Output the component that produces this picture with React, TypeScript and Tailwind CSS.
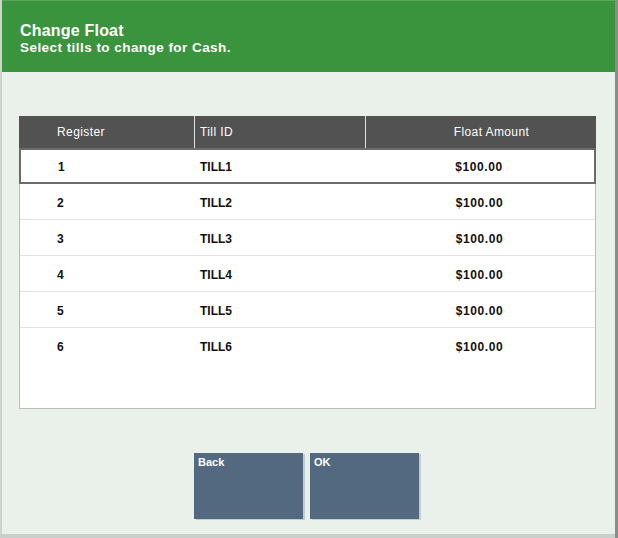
import React from "react";

const rows = [
  { reg: "1", till: "TILL1", amt: "$100.00" },
  { reg: "2", till: "TILL2", amt: "$100.00" },
  { reg: "3", till: "TILL3", amt: "$100.00" },
  { reg: "4", till: "TILL4", amt: "$100.00" },
  { reg: "5", till: "TILL5", amt: "$100.00" },
  { reg: "6", till: "TILL6", amt: "$100.00" },
];

export default function App() {
  return (
    <div
      className="w-[618px] h-[538px] flex bg-[#e9f1ea] overflow-hidden"
      style={{ fontFamily: '"Liberation Sans", Arial, sans-serif' }}
    >
      <div className="w-[615px] h-[538px] flex flex-col border-l-2 border-l-[#cdd4ce] border-b-[4px] border-b-[#c9cfca]">
        <div className="h-[72px] bg-[#3a943d] border-t border-t-[#5aa85c] pl-[18px] pt-[21px] text-white font-bold">
          <div className="text-[16px] leading-[18px] tracking-[0.2px]">Change Float</div>
          <div className="text-[13.5px] leading-[15px] tracking-[0.45px]">Select tills to change for Cash.</div>
        </div>
        <div className="pt-[44px] pl-[17px] pr-[19px]">
          <div className="h-[293px] bg-white border border-[#b9bdbf] border-t-0 flex flex-col">
            <div className="h-[32px] bg-[#525252] flex text-white text-[12px] tracking-[0.4px] -mx-px">
              <div className="w-[176px] border-r border-r-[#e0e0e0] flex items-center pl-[38px]">Register</div>
              <div className="w-[171px] border-r border-r-[#e0e0e0] flex items-center pl-[5px]">Till ID</div>
              <div className="flex-1 flex items-center justify-center pl-[21px]">Float Amount</div>
            </div>
            {rows.map((r, i) => (
              <div
                key={r.reg}
                className={
                  "h-[36px] flex items-center pt-[2px] text-[12px] font-bold text-[#111] " +
                  (i === 0
                    ? "border-2 border-[#6b6b6b] -mx-px"
                    : i === rows.length - 1
                    ? ""
                    : "border-b border-b-[#e2e2e2]")
                }
              >
                <div className={i === 0 ? "w-[174px] pl-[37px]" : "w-[175px] pl-[37px]"}>{r.reg}</div>
                <div className="w-[171px] pl-[5px]">{r.till}</div>
                <div className="flex-1 flex justify-center tracking-[0.6px] pr-[2px]">{r.amt}</div>
              </div>
            ))}
          </div>
        </div>
        <div className="flex gap-[7px] pl-[192px] pt-[44px]">
          <div className="w-[109px] h-[66px] bg-[#536980] shadow-[2px_1px_0_#c3cdcf] text-white text-[11px] font-bold px-[4px] pt-[1px]">
            Back
          </div>
          <div className="w-[109px] h-[66px] bg-[#536980] shadow-[2px_1px_0_#c3cdcf] text-white text-[11px] font-bold px-[4px] pt-[1px]">
            OK
          </div>
        </div>
      </div>
      <div className="w-[3px] h-[538px] bg-[#8c8c8c]" />
    </div>
  );
}
